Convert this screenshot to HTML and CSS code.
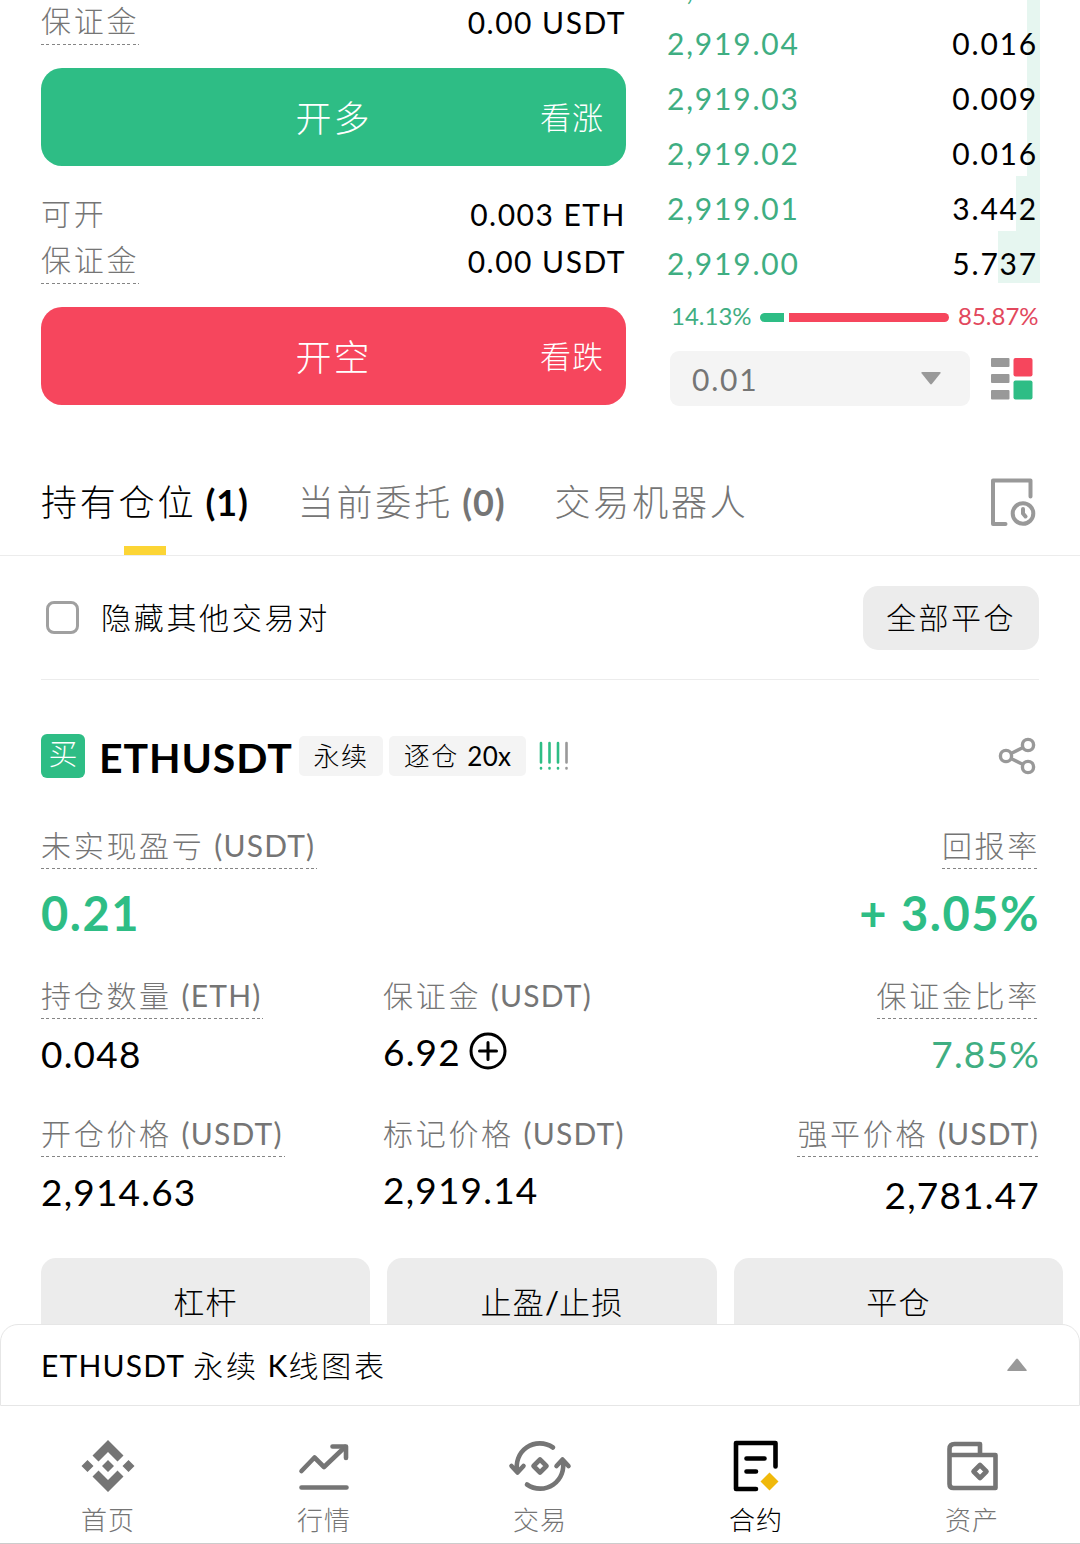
FILE: index.html
```html
<!DOCTYPE html>
<html lang="zh-CN">
<head>
  <meta charset="UTF-8">
  <meta name="viewport" content="width=device-width, initial-scale=1.0">
  <title>ETHUSDT 永续</title>
  <link rel="stylesheet" href="styles.css">
</head>
<body>
  <div class="screen">
    <!-- Order form and order book -->
    <section class="trade">
      <div class="order-form">
        <div class="form-row margin-row">
          <span class="label dotted"><span class="cn">保证金</span></span>
          <span class="amount">0.00 USDT</span>
        </div>
        <button class="order-btn long"><span class="order-main">开多</span><span class="order-side">看涨</span></button>
        <div class="form-row open-row">
          <span class="label"><span class="cn">可开</span></span>
          <span class="amount">0.003 ETH</span>
        </div>
        <div class="form-row margin-row">
          <span class="label dotted"><span class="cn">保证金</span></span>
          <span class="amount">0.00 USDT</span>
        </div>
        <button class="order-btn short"><span class="order-main">开空</span><span class="order-side">看跌</span></button>
      </div>

      <div class="order-book">
        <div class="book-row"><span class="price">2,919.05</span><i class="depth" style="width: 13px"></i></div>
        <div class="book-row"><span class="price">2,919.04</span><span class="qty">0.016</span><i class="depth" style="width: 13px"></i></div>
        <div class="book-row"><span class="price">2,919.03</span><span class="qty">0.009</span><i class="depth" style="width: 13px"></i></div>
        <div class="book-row"><span class="price">2,919.02</span><span class="qty">0.016</span><i class="depth" style="width: 13px"></i></div>
        <div class="book-row"><span class="price">2,919.01</span><span class="qty">3.442</span><i class="depth" style="width: 24px"></i></div>
        <div class="book-row last"><span class="price">2,919.00</span><span class="qty">5.737</span><i class="depth" style="width: 42px"></i></div>
        <div class="ratio">
          <span class="ratio-buy">14.13%</span>
          <span class="ratio-bar"><i class="bar-buy"></i><i class="bar-sell"></i></span>
          <span class="ratio-sell">85.87%</span>
        </div>
        <div class="book-tools">
          <div class="step-select">
            <span>0.01</span>
            <svg width="20" height="13" viewBox="0 0 20 13"><path d="M1.5 0h17q2 0 .8 1.6l-8.3 10.2q-1 1.2-2 0L.7 1.6Q-.5 0 1.5 0z" fill="#999"/></svg>
          </div>
          <svg class="book-mode" width="42" height="42" viewBox="0 0 42 42">
            <g fill="#999"><rect y="0" width="18.500" height="9" rx="1"/><rect y="16" width="18.500" height="9" rx="1"/><rect y="32" width="18.500" height="9.500" rx="1"/></g>
            <rect x="22.500" width="19" height="18.500" rx="2" fill="#f6465d"/>
            <rect x="22.500" y="22.500" width="19" height="19" rx="2" fill="#2ebd85"/>
          </svg>
        </div>
      </div>
    </section>

    <!-- Tabs -->
    <nav class="tabs">
      <a class="tab active"><span class="tab-cn">持有仓位</span> <b>(1)</b></a>
      <a class="tab"><span class="tab-cn">当前委托</span> <b>(0)</b></a>
      <a class="tab"><span class="tab-cn">交易机器人</span></a>
      <svg class="history" width="46" height="50" viewBox="0 0 46 50" fill="none" stroke="#999" stroke-width="4" stroke-linecap="round" stroke-linejoin="round">
        <path d="M15.500 46H3V2.500h37.500v16"/>
        <circle cx="33" cy="35.500" r="10.300"/>
        <path d="M33 31v4.500l2.500 3"/>
      </svg>
    </nav>

    <!-- Filter -->
    <div class="filter">
      <span class="checkbox"></span>
      <span class="filter-text">隐藏其他交易对</span>
      <button class="close-all">全部平仓</button>
    </div>

    <!-- Position -->
    <section class="position">
      <div class="pos-head">
        <span class="side">买</span>
        <h2>ETHUSDT</h2>
        <span class="tag perp">永续</span>
        <span class="tag lever">逐仓 <span class="lever-num">20x</span></span>
        <svg class="risk" width="30" height="30" viewBox="0 0 30 30" stroke-width="2.600" stroke-linecap="round">
          <path d="M2 2v19.500M2 27v.5M10.500 2v19.500M10.500 27v.5M19 2v19.500M19 27v.5" stroke="#2ebd85"/>
          <path d="M27.500 2v19.500M27.500 27v.5" stroke="#999"/>
        </svg>
        <svg class="share" width="38" height="38" viewBox="0 0 38 38" fill="none" stroke="#999" stroke-width="3.400">
          <circle cx="8" cy="19" r="5.600"/><circle cx="30" cy="8" r="5.600"/><circle cx="30" cy="30" r="5.600"/>
          <path d="M13 16.500l12-6M13 21.500l12 6"/>
        </svg>
      </div>

      <div class="pnl">
        <div class="cell">
          <span class="label dotted"><span class="cn">未实现盈亏</span> <span class="unit">(USDT)</span></span>
          <strong>0.21</strong>
        </div>
        <div class="cell end">
          <span class="label dotted"><span class="cn">回报率</span></span>
          <strong>+ 3.05%</strong>
        </div>
      </div>

      <div class="stats">
        <div class="cell">
          <span class="label dotted"><span class="cn">持仓数量</span> <span class="unit">(ETH)</span></span>
          <span class="value">0.048</span>
        </div>
        <div class="cell middle">
          <span class="label"><span class="cn">保证金</span> <span class="unit">(USDT)</span></span>
          <span class="value">6.92
            <svg width="38" height="38" viewBox="0 0 38 38" fill="none" stroke="#000" stroke-width="3"><circle cx="19" cy="19" r="17"/><path d="M10.500 19h17M19 10.500v17" stroke-linecap="round"/></svg>
          </span>
        </div>
        <div class="cell end">
          <span class="label dotted"><span class="cn">保证金比率</span></span>
          <span class="value green">7.85%</span>
        </div>
        <div class="cell">
          <span class="label dotted"><span class="cn">开仓价格</span> <span class="unit">(USDT)</span></span>
          <span class="value">2,914.63</span>
        </div>
        <div class="cell middle">
          <span class="label"><span class="cn">标记价格</span> <span class="unit">(USDT)</span></span>
          <span class="value">2,919.14</span>
        </div>
        <div class="cell end">
          <span class="label dotted"><span class="cn">强平价格</span> <span class="unit">(USDT)</span></span>
          <span class="value lower">2,781.47</span>
        </div>
      </div>

      <div class="actions">
        <button>杠杆</button>
        <button>止盈<b>/</b>止损</button>
        <button>平仓</button>
      </div>
    </section>

    <!-- Chart drawer -->
    <div class="chart-bar">
      <span class="chart-title">ETHUSDT <span class="cn">永续</span> K<span class="cn">线图表</span></span>
      <svg width="20" height="13" viewBox="0 0 20 13"><path d="M1.500 13h17q2 0 .8-1.600L11 1.200q-1-1.200-2 0L.7 11.400Q-.5 13 1.500 13z" fill="#999"/></svg>
    </div>

    <!-- Bottom navigation -->
    <footer class="bottom-nav">
      <a>
        <svg width="64" height="56" viewBox="0 0 64 56" fill="#757575">
          <path d="M32 2l15.500 15.500-6 6L32 14l-9.500 9.500-6-6z"/>
          <path d="M32 54l15.500-15.500-6-6L32 42l-9.500-9.500-6 6z"/>
          <path d="M32 22l6 6-6 6-6-6zM11.500 22l6 6-6 6-6-6zM52.500 22l6 6-6 6-6-6z"/>
        </svg>
        <span>首页</span>
      </a>
      <a>
        <svg width="64" height="56" viewBox="0 0 64 56" fill="none" stroke="#757575" stroke-width="4.600" stroke-linecap="round" stroke-linejoin="round">
          <path d="M9.500 33L22.500 19.500l9.500 9.500L53 9"/><path d="M40.500 8.500H54v11.500M9.500 49.500h45"/>
        </svg>
        <span>行情</span>
      </a>
      <a>
        <svg width="64" height="56" viewBox="0 0 64 56" fill="none" stroke="#757575" stroke-width="4.600" stroke-linecap="round" stroke-linejoin="round">
          <path d="M45 9.500A23 23 0 0 0 9.500 34M3.500 28l6 6.500 6-6.500"/>
          <path d="M19 46.500A23 23 0 0 0 54.500 22M48.500 28l6-6.500 6 6.500"/>
          <path d="M32 21.500l6.500 6.500-6.500 6.500-6.500-6.500z"/>
        </svg>
        <span>交易</span>
      </a>
      <a class="current">
        <svg width="64" height="56" viewBox="0 0 64 56" fill="none" stroke="#000" stroke-width="4.600" stroke-linecap="round" stroke-linejoin="round">
          <path d="M32 51H12V5h39.500v23.500M22.500 20.500h18M22.500 33.500h9.500"/>
          <path d="M45.500 34.500l9 9-9 9-9-9z" fill="#f0b90b" stroke="none"/>
        </svg>
        <span>合约</span>
      </a>
      <a>
        <svg width="64" height="56" viewBox="0 0 64 56" fill="none" stroke="#757575" stroke-width="4.600" stroke-linecap="round" stroke-linejoin="round">
          <path d="M9.500 12v34q0 4 4 4h42V17H9.500V11q0-5 5-5H40v11"/>
          <path d="M40 27l6.500 6.500-6.500 6.500-6.500-6.500z"/>
        </svg>
        <span>资产</span>
      </a>
    </footer>
  </div>
</body>
</html>
```

FILE: styles.css
```css
:root {
  --green: #2ebd85;
  --red: #f6465d;
  --yellow: #fcd535;
  --gray: #757575;
  --line: #ececec;
}

* {
  box-sizing: border-box;
}

body {
  margin: 0;
  background: #fff;
  color: #000;
  font-family: Lato, "Noto Sans CJK SC", sans-serif;
  font-size: 30px;
}

button {
  border: none;
  padding: 0;
  font-family: inherit;
  color: inherit;
}

svg {
  display: block;
  flex: none;
}

.screen {
  width: 1080px;
  height: 1544px;
  overflow: hidden;
  display: flex;
  flex-direction: column;
}

.cn {
  font-weight: 300;
  letter-spacing: 2.7px;
}

.unit {
  margin-left: 2px;
  padding-right: 2px;
  letter-spacing: 1.2px;
}

.end .unit {
  padding-right: 0;
}

.label {
  display: block;
  color: var(--gray);
  line-height: 42px;
  height: 45px;
  white-space: nowrap;
}

.dotted {
  background: repeating-linear-gradient(90deg, #858585 0 3px, transparent 3px 5.4px) left bottom / 100% 1.5px no-repeat;
}

/* Order form */
.trade {
  display: flex;
  flex: none;
  height: 450px;
  padding: 0 40px 0 41px;
  overflow: hidden;
}

.order-form {
  width: 585px;
  margin-right: 41px;
}

.form-row {
  display: flex;
  justify-content: space-between;
}

.form-row .label {
  line-height: 40px;
}

.amount {
  line-height: 45px;
  letter-spacing: 1.5px;
}

.open-row {
  margin-top: 25px;
  height: 48px;
}

.open-row .label {
  line-height: 44px;
}

.open-row .amount {
  line-height: 46px;
}

.order-btn {
  width: 100%;
  height: 98px;
  margin-top: 23px;
  padding: 0 22px 3px;
  border-radius: 21px;
  color: #fff;
  display: grid;
  grid-template-columns: 1fr auto 1fr;
  align-items: center;
  font-weight: 300;
}

.order-btn.long {
  background: var(--green);
}

.order-btn.short {
  background: var(--red);
}

.order-main {
  grid-column: 2;
  font-size: 36px;
  letter-spacing: 2px;
}

.order-side {
  justify-self: end;
  font-size: 31px;
  letter-spacing: 1px;
}

/* Order book */
.order-book {
  flex: 1;
}

.book-row {
  position: relative;
  display: flex;
  justify-content: space-between;
  height: 55px;
  line-height: 65px;
  padding-right: 2px;
  letter-spacing: 1.8px;
}

.book-row:first-child {
  margin-top: -44px;
}

.price {
  color: #3fae82;
}

.qty {
  position: relative;
  z-index: 1;
}

.depth {
  position: absolute;
  top: 0;
  right: 0;
  height: 55px;
  background: #e6f6f0;
}

.last .depth {
  height: 52px;
}

.ratio {
  display: flex;
  align-items: center;
  height: 36px;
  margin-top: 13px;
  padding-left: 4px;
  font-size: 24px;
}

.ratio-buy {
  width: 89px;
  margin-top: -3px;
  color: #3fae82;
}

.ratio-sell {
  margin-top: -3px;
  color: #e2485d;
}

.ratio-bar {
  display: flex;
  gap: 5px;
  width: 189px;
  margin-right: 9px;
}

.bar-buy,
.bar-sell {
  height: 9px;
}

.bar-buy {
  width: 24px;
  background: var(--green);
  border-radius: 5px 0 0 5px;
}

.bar-sell {
  flex: 1;
  background: var(--red);
  border-radius: 0 5px 5px 0;
}

.book-tools {
  display: flex;
  align-items: center;
  margin-top: 16px;
  padding-left: 3px;
}

.step-select {
  display: flex;
  align-items: center;
  justify-content: space-between;
  width: 300px;
  height: 55px;
  margin-right: 21px;
  padding: 1px 29px 0 22px;
  border-radius: 9px;
  background: #f4f4f4;
  color: var(--gray);
  letter-spacing: 1.8px;
}

.step-select svg {
  margin-top: -2px;
}

/* Tabs */
.tabs {
  display: flex;
  flex: none;
  height: 106px;
  padding: 0 44px 0 41px;
  border-bottom: 1px solid var(--line);
  line-height: 104px;
  font-size: 36px;
  color: var(--gray);
}

.tab {
  position: relative;
  margin-right: 49px;
  white-space: nowrap;
}

.tab b {
  letter-spacing: 0.9px;
}

.tab-cn {
  font-weight: 300;
  letter-spacing: 2.8px;
}

.tab.active {
  color: #000;
}

.tab.active::after {
  content: "";
  position: absolute;
  left: 50%;
  bottom: 0;
  width: 42px;
  height: 9px;
  margin-left: -21px;
  background: var(--yellow);
}

.history {
  margin: 28px 0 0 auto;
}

/* Filter */
.filter {
  display: flex;
  align-items: center;
  flex: none;
  height: 124px;
  margin: 0 41px;
  border-bottom: 1px solid var(--line);
  font-weight: 300;
}

.checkbox {
  width: 33px;
  height: 33px;
  margin: 0 22px 0 5px;
  border: 3px solid #a0a0a0;
  border-radius: 8px;
}

.filter-text {
  margin-top: -4px;
  letter-spacing: 2.7px;
}

.close-all {
  width: 176px;
  height: 64px;
  margin-left: auto;
  padding-bottom: 4px;
  border-radius: 15px;
  background: #ececec;
  font-size: 30px;
  font-weight: 300;
  letter-spacing: 2.4px;
}

/* Position */
.position {
  flex: none;
  height: 644px;
  padding: 54px 41px 0;
  overflow: hidden;
}

.pos-head {
  display: flex;
  align-items: center;
  height: 44px;
}

.side {
  width: 44px;
  height: 44px;
  border-radius: 6px;
  background: var(--green);
  color: #fff;
  font-size: 29px;
  font-weight: 300;
  line-height: 40px;
  text-align: center;
}

h2 {
  width: 200px;
  margin: 3px 0 0 14px;
  font-size: 41px;
  line-height: 44px;
  letter-spacing: 0.9px;
}

.tag {
  height: 40px;
  border-radius: 5px;
  background: #f4f4f4;
  font-size: 26px;
  font-weight: 300;
  line-height: 40px;
  text-align: center;
  letter-spacing: 1.5px;
}

.perp {
  width: 84px;
}

.lever {
  width: 137px;
  margin-left: 6px;
}

.lever-num {
  font-weight: 400;
  letter-spacing: 0.3px;
}

.risk {
  margin-left: 13px;
}

.share {
  margin: 0 3px 0 auto;
}

.pnl {
  display: flex;
  justify-content: space-between;
  margin-top: 46px;
}

.cell {
  display: flex;
  flex-direction: column;
  align-items: flex-start;
}

.cell.end {
  align-items: flex-end;
}

.cell.end .cn:last-child {
  margin-right: -1px;
}

strong {
  margin-top: 10px;
  color: var(--green);
  font-size: 47px;
  line-height: 68px;
  letter-spacing: 1.5px;
}

.end strong,
.end .value {
  margin-right: -1px;
}

.value {
  display: flex;
  align-items: center;
  gap: 8px;
  height: 60px;
  margin-top: 4px;
  font-size: 37px;
  letter-spacing: 1.2px;
}

.middle .value {
  margin-top: 2px;
}

.value.lower {
  margin-top: 7px;
}

.green {
  color: #3fae82;
}

.stats {
  display: grid;
  grid-template-columns: 342px 270px 386px;
  grid-template-rows: 138px 138px;
  margin-top: 27px;
}

.actions {
  display: grid;
  grid-template-columns: 329px 330px 329px;
  gap: 17px;
  margin-top: 8px;
}

.actions button {
  height: 90px;
  padding-bottom: 6px;
  border-radius: 15px;
  background: #ececec;
  font-size: 31px;
  font-weight: 300;
  letter-spacing: 1.2px;
}

.actions b {
  letter-spacing: 0;
}

/* Chart drawer */
.chart-bar {
  display: flex;
  align-items: center;
  justify-content: space-between;
  flex: none;
  height: 82px;
  padding: 0 52px 0 40px;
  border: 1px solid #e6e6e6;
  border-radius: 18px 18px 0 0;
  background: #fff;
}

.chart-bar svg {
  margin-top: -2px;
}

.chart-title {
  margin-top: -3px;
  letter-spacing: 1.2px;
}

/* Bottom navigation */
.bottom-nav {
  display: grid;
  grid-template-columns: repeat(5, 1fr);
  flex: 1;
  border-bottom: 1px solid #ccc;
  color: var(--gray);
  font-size: 26px;
  font-weight: 300;
}

.bottom-nav a {
  display: flex;
  flex-direction: column;
  align-items: center;
  padding-top: 32px;
}

.bottom-nav span {
  margin-top: 7px;
  line-height: 39px;
  letter-spacing: 1px;
}

.bottom-nav .current {
  color: #000;
}
```
